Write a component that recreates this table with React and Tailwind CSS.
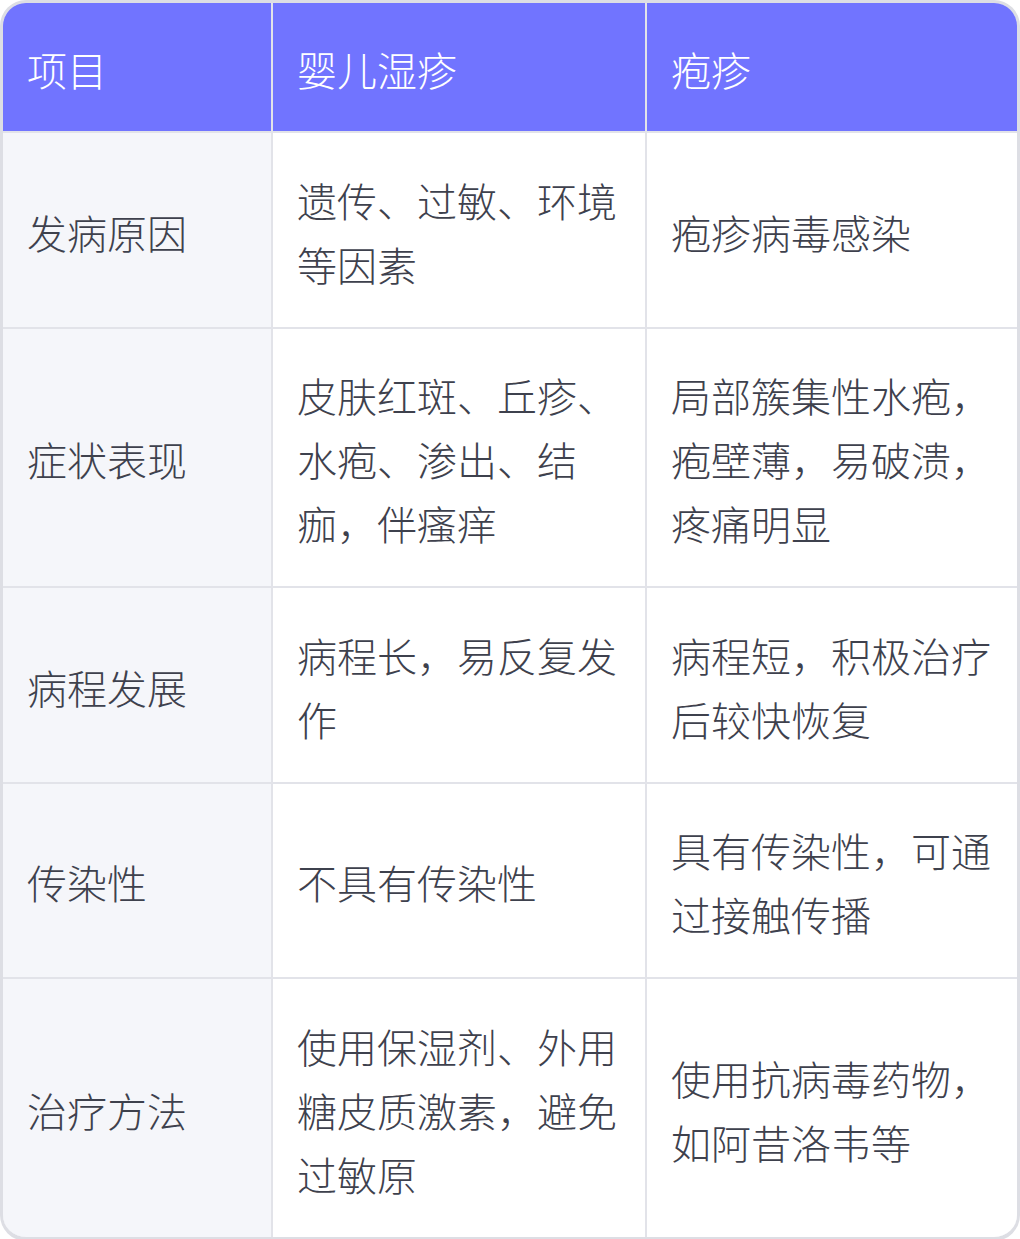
const rows = [
  ['发病原因', '遗传、过敏、环境等因素', '疱疹病毒感染'],
  ['症状表现', '皮肤红斑、丘疹、水疱、渗出、结痂，伴瘙痒', '局部簇集性水疱，疱壁薄，易破溃，疼痛明显'],
  ['病程发展', '病程长，易反复发作', '病程短，积极治疗后较快恢复'],
  ['传染性', '不具有传染性', '具有传染性，可通过接触传播'],
  ['治疗方法', '使用保湿剂、外用糖皮质激素，避免过敏原', '使用抗病毒药物，如阿昔洛韦等'],
]

export default function App() {
  return (
    <div className="w-[1020px] bg-white" style={{ fontFamily: '"Noto Sans CJK SC", "Noto Sans", sans-serif' }}>
      <div className="border-[3px] border-b-[4px] border-[#dddee4] rounded-[26px] overflow-hidden">
        <div className="grid grid-cols-[268px_372px_1fr] gap-[2px] bg-[#e2e3e9] text-[40px] leading-[64px] font-light">
          {['项目', '婴儿湿疹', '疱疹'].map((h) => (
            <div key={h} className="bg-[#7174ff] text-white pl-[24px] pr-[22px] pt-[34px] pb-[30px] flex items-center">
              {h}
            </div>
          ))}
          {rows.map((r) =>
            r.map((c, i) => (
              <div
                key={r[0] + i}
                className={`${i === 0 ? 'bg-[#f5f6fa]' : 'bg-white'} text-[#3e414d] pl-[24px] pr-[22px] pt-[34.5px] pb-[31px] flex items-center`}
              >
                <span>{c}</span>
              </div>
            ))
          )}
        </div>
      </div>
    </div>
  )
}
